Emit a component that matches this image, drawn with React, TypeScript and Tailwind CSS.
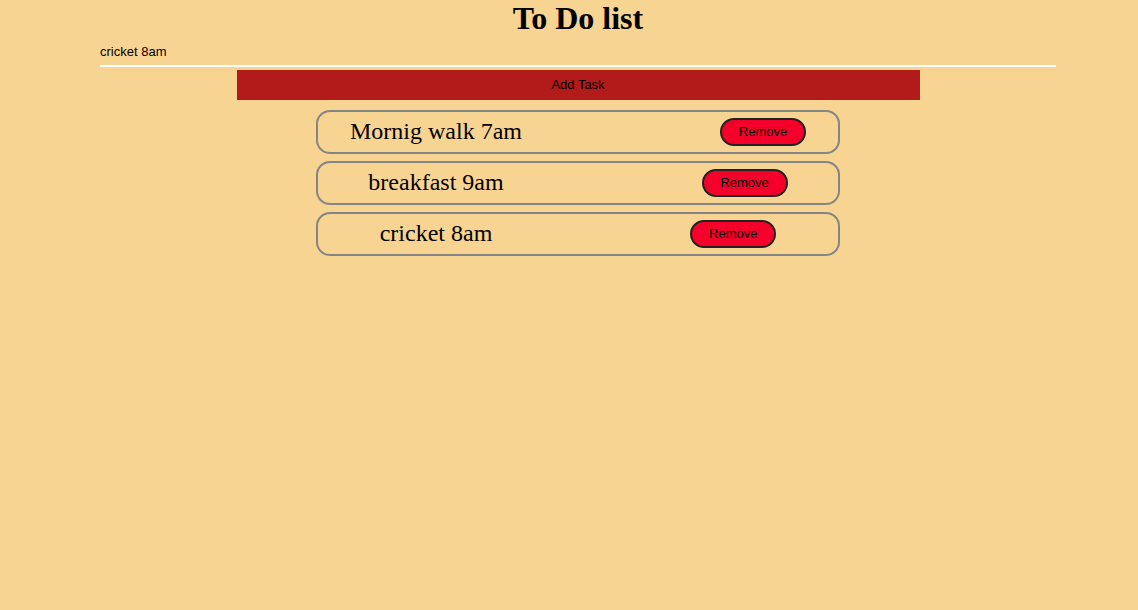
import React, { useState } from 'react';

const initialTasks = ['Mornig walk 7am', 'breakfast 9am', 'cricket 8am'];

export default function App() {
  const [tasks, setTasks] = useState<string[]>(initialTasks);
  const [text, setText] = useState('cricket 8am');

  const addTask = () => {
    if (!text.trim()) return;
    setTasks([...tasks, text]);
    setText('');
  };

  const removeTask = (index: number) => {
    setTasks(tasks.filter((_, i) => i !== index));
  };

  return (
    <div className="min-h-screen bg-[#f8d492]">
      <div className="ml-[100px] w-[956px] flex flex-col">
        <h1 className="m-0 text-center text-[32px] leading-[37px] font-bold text-black font-['Liberation_Serif','Times_New_Roman',serif]">
          To Do list
        </h1>

        {/* Task input */}
        <input
          value={text}
          onChange={(e) => setText(e.target.value)}
          className="h-[30px] w-full bg-transparent border-0 border-b-2 border-white outline-none text-[13px] text-black px-0 font-['Liberation_Sans',Arial,sans-serif]"
        />

        <button
          onClick={addTask}
          className="mt-[3px] mx-auto w-[683px] h-[30px] bg-[#b31a1a] text-black text-[13px] font-['Liberation_Sans',Arial,sans-serif]"
        >
          Add Task
        </button>

        <ul className="mt-[10px] flex flex-col gap-[7px]">
          {tasks.map((task, i) => (
            <li
              key={i}
              className="mx-auto w-[524px] h-[44px] flex items-center justify-center gap-[198px] border-2 border-[#858585] rounded-[14px]"
            >
              <span className="text-[24px] leading-none -mt-[3px] text-black font-['Liberation_Serif','Times_New_Roman',serif]">
                {task}
              </span>
              <button
                onClick={() => removeTask(i)}
                className="w-[86px] h-[28px] rounded-full bg-[#f5002b] border-2 border-[#222] text-black text-[13px] font-['Liberation_Sans',Arial,sans-serif]"
              >
                Remove
              </button>
            </li>
          ))}
        </ul>
      </div>
    </div>
  );
}
